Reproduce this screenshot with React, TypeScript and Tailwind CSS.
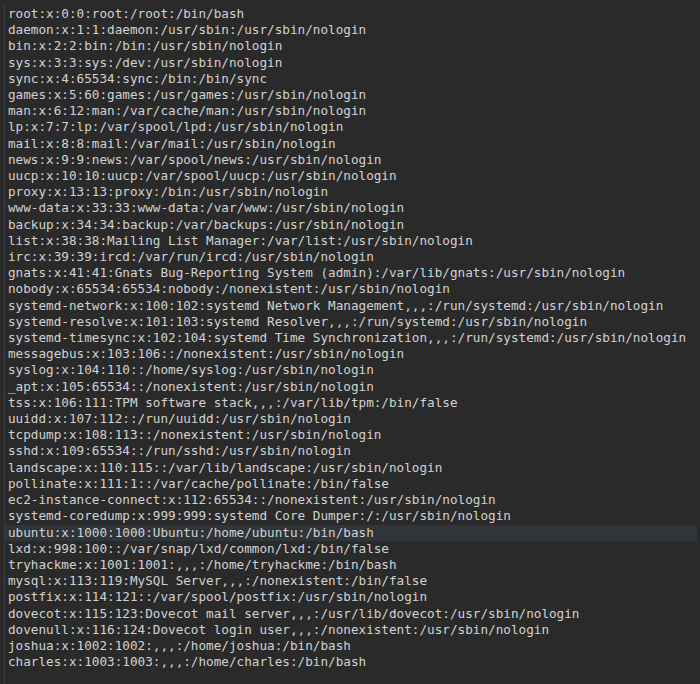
const lines = [
  "root:x:0:0:root:/root:/bin/bash",
  "daemon:x:1:1:daemon:/usr/sbin:/usr/sbin/nologin",
  "bin:x:2:2:bin:/bin:/usr/sbin/nologin",
  "sys:x:3:3:sys:/dev:/usr/sbin/nologin",
  "sync:x:4:65534:sync:/bin:/bin/sync",
  "games:x:5:60:games:/usr/games:/usr/sbin/nologin",
  "man:x:6:12:man:/var/cache/man:/usr/sbin/nologin",
  "lp:x:7:7:lp:/var/spool/lpd:/usr/sbin/nologin",
  "mail:x:8:8:mail:/var/mail:/usr/sbin/nologin",
  "news:x:9:9:news:/var/spool/news:/usr/sbin/nologin",
  "uucp:x:10:10:uucp:/var/spool/uucp:/usr/sbin/nologin",
  "proxy:x:13:13:proxy:/bin:/usr/sbin/nologin",
  "www-data:x:33:33:www-data:/var/www:/usr/sbin/nologin",
  "backup:x:34:34:backup:/var/backups:/usr/sbin/nologin",
  "list:x:38:38:Mailing List Manager:/var/list:/usr/sbin/nologin",
  "irc:x:39:39:ircd:/var/run/ircd:/usr/sbin/nologin",
  "gnats:x:41:41:Gnats Bug-Reporting System (admin):/var/lib/gnats:/usr/sbin/nologin",
  "nobody:x:65534:65534:nobody:/nonexistent:/usr/sbin/nologin",
  "systemd-network:x:100:102:systemd Network Management,,,:/run/systemd:/usr/sbin/nologin",
  "systemd-resolve:x:101:103:systemd Resolver,,,:/run/systemd:/usr/sbin/nologin",
  "systemd-timesync:x:102:104:systemd Time Synchronization,,,:/run/systemd:/usr/sbin/nologin",
  "messagebus:x:103:106::/nonexistent:/usr/sbin/nologin",
  "syslog:x:104:110::/home/syslog:/usr/sbin/nologin",
  "_apt:x:105:65534::/nonexistent:/usr/sbin/nologin",
  "tss:x:106:111:TPM software stack,,,:/var/lib/tpm:/bin/false",
  "uuidd:x:107:112::/run/uuidd:/usr/sbin/nologin",
  "tcpdump:x:108:113::/nonexistent:/usr/sbin/nologin",
  "sshd:x:109:65534::/run/sshd:/usr/sbin/nologin",
  "landscape:x:110:115::/var/lib/landscape:/usr/sbin/nologin",
  "pollinate:x:111:1::/var/cache/pollinate:/bin/false",
  "ec2-instance-connect:x:112:65534::/nonexistent:/usr/sbin/nologin",
  "systemd-coredump:x:999:999:systemd Core Dumper:/:/usr/sbin/nologin",
  "ubuntu:x:1000:1000:Ubuntu:/home/ubuntu:/bin/bash",
  "lxd:x:998:100::/var/snap/lxd/common/lxd:/bin/false",
  "tryhackme:x:1001:1001:,,,:/home/tryhackme:/bin/bash",
  "mysql:x:113:119:MySQL Server,,,:/nonexistent:/bin/false",
  "postfix:x:114:121::/var/spool/postfix:/usr/sbin/nologin",
  "dovecot:x:115:123:Dovecot mail server,,,:/usr/lib/dovecot:/usr/sbin/nologin",
  "dovenull:x:116:124:Dovecot login user,,,:/nonexistent:/usr/sbin/nologin",
  "joshua:x:1002:1002:,,,:/home/joshua:/bin/bash",
  "charles:x:1003:1003:,,,:/home/charles:/bin/bash",
];

export default function App() {
  return (
    <div className="w-[700px] h-[684px] overflow-hidden bg-[#2a2a2a] pl-[4px] pt-[4px]">
      <div className="h-full border-l border-[#3c3c3c] pt-[2px] pr-[3px] font-['DejaVu_Sans_Mono',monospace] text-[12.66px] leading-[16.2px] text-[#d2d2d2]">
        {lines.map((line, i) => (
          <div
            key={i}
            className={
              i === 32
                ? "pl-[3px] whitespace-pre bg-[#30353a]"
                : "pl-[3px] whitespace-pre"
            }
          >
            {line}
          </div>
        ))}
      </div>
    </div>
  );
}
